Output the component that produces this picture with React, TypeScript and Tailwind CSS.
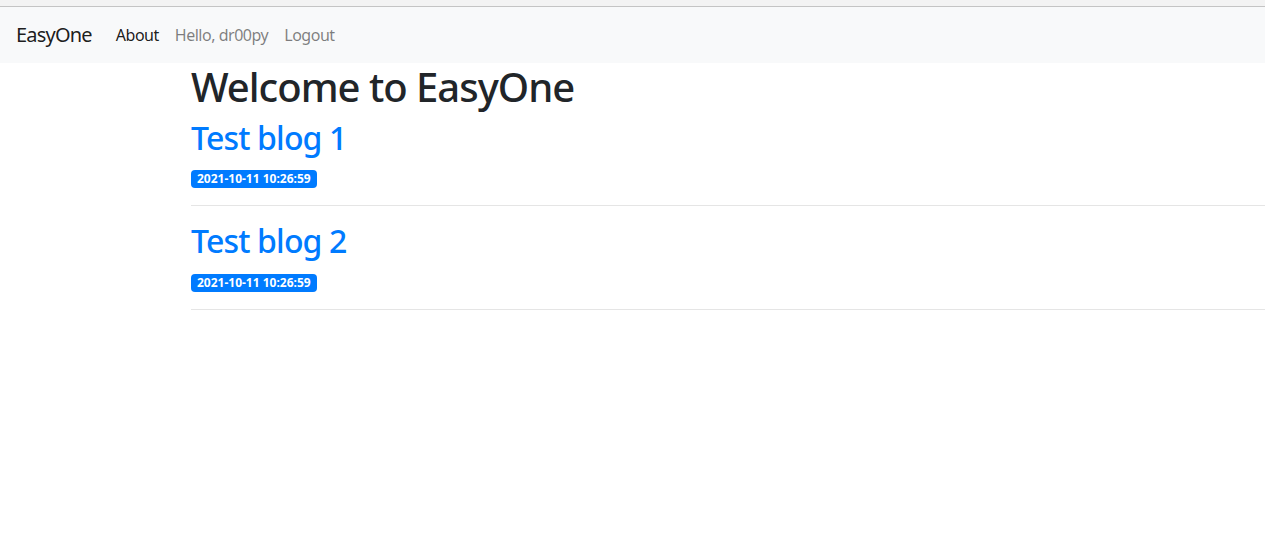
export default function App() {
  const posts = [
    { title: "Test blog 1", date: "2021-10-11 10:26:59" },
    { title: "Test blog 2", date: "2021-10-11 10:26:59" },
  ];
  return (
    <div className="min-h-[537px] bg-white text-[#212529]" style={{ fontFamily: '"Noto Sans", "Open Sans", sans-serif' }}>
      <div className="h-[6px] bg-[#f3f3f3]" />
      <div className="h-px bg-[#c4c4c4]" />
      <nav className="flex h-[56px] items-center bg-[#f8f9fa] px-4 tracking-[-0.03em]">
        <span className="mr-4 text-[20px] leading-[30px] tracking-[-0.04em] text-black/90">EasyOne</span>
        <a className="px-2 text-[16px] text-black/90">About</a>
        <span className="px-2 text-[16px] text-black/50">Hello, dr00py</span>
        <a className="px-2 text-[16px] text-black/50">Logout</a>
      </nav>
      <main className="pl-[191px]">
        <h1 className="mb-2 text-[40px] font-medium leading-[1.2] tracking-[-0.025em]">Welcome to EasyOne</h1>
        {posts.map((p, i) => (
          <div key={i}>
            <h2 className="mb-2 text-[32px] font-medium leading-[1.2] tracking-[-0.026em] text-[#007bff]">{p.title}</h2>
            <div className="leading-6">
              <span className="inline-block rounded-[4px] bg-[#007bff] px-[6px] py-[3px] align-middle text-[12px] font-bold leading-none text-white">
                {p.date}
              </span>
            </div>
            <hr className="my-4 border-t border-black/10" />
          </div>
        ))}
      </main>
    </div>
  );
}
